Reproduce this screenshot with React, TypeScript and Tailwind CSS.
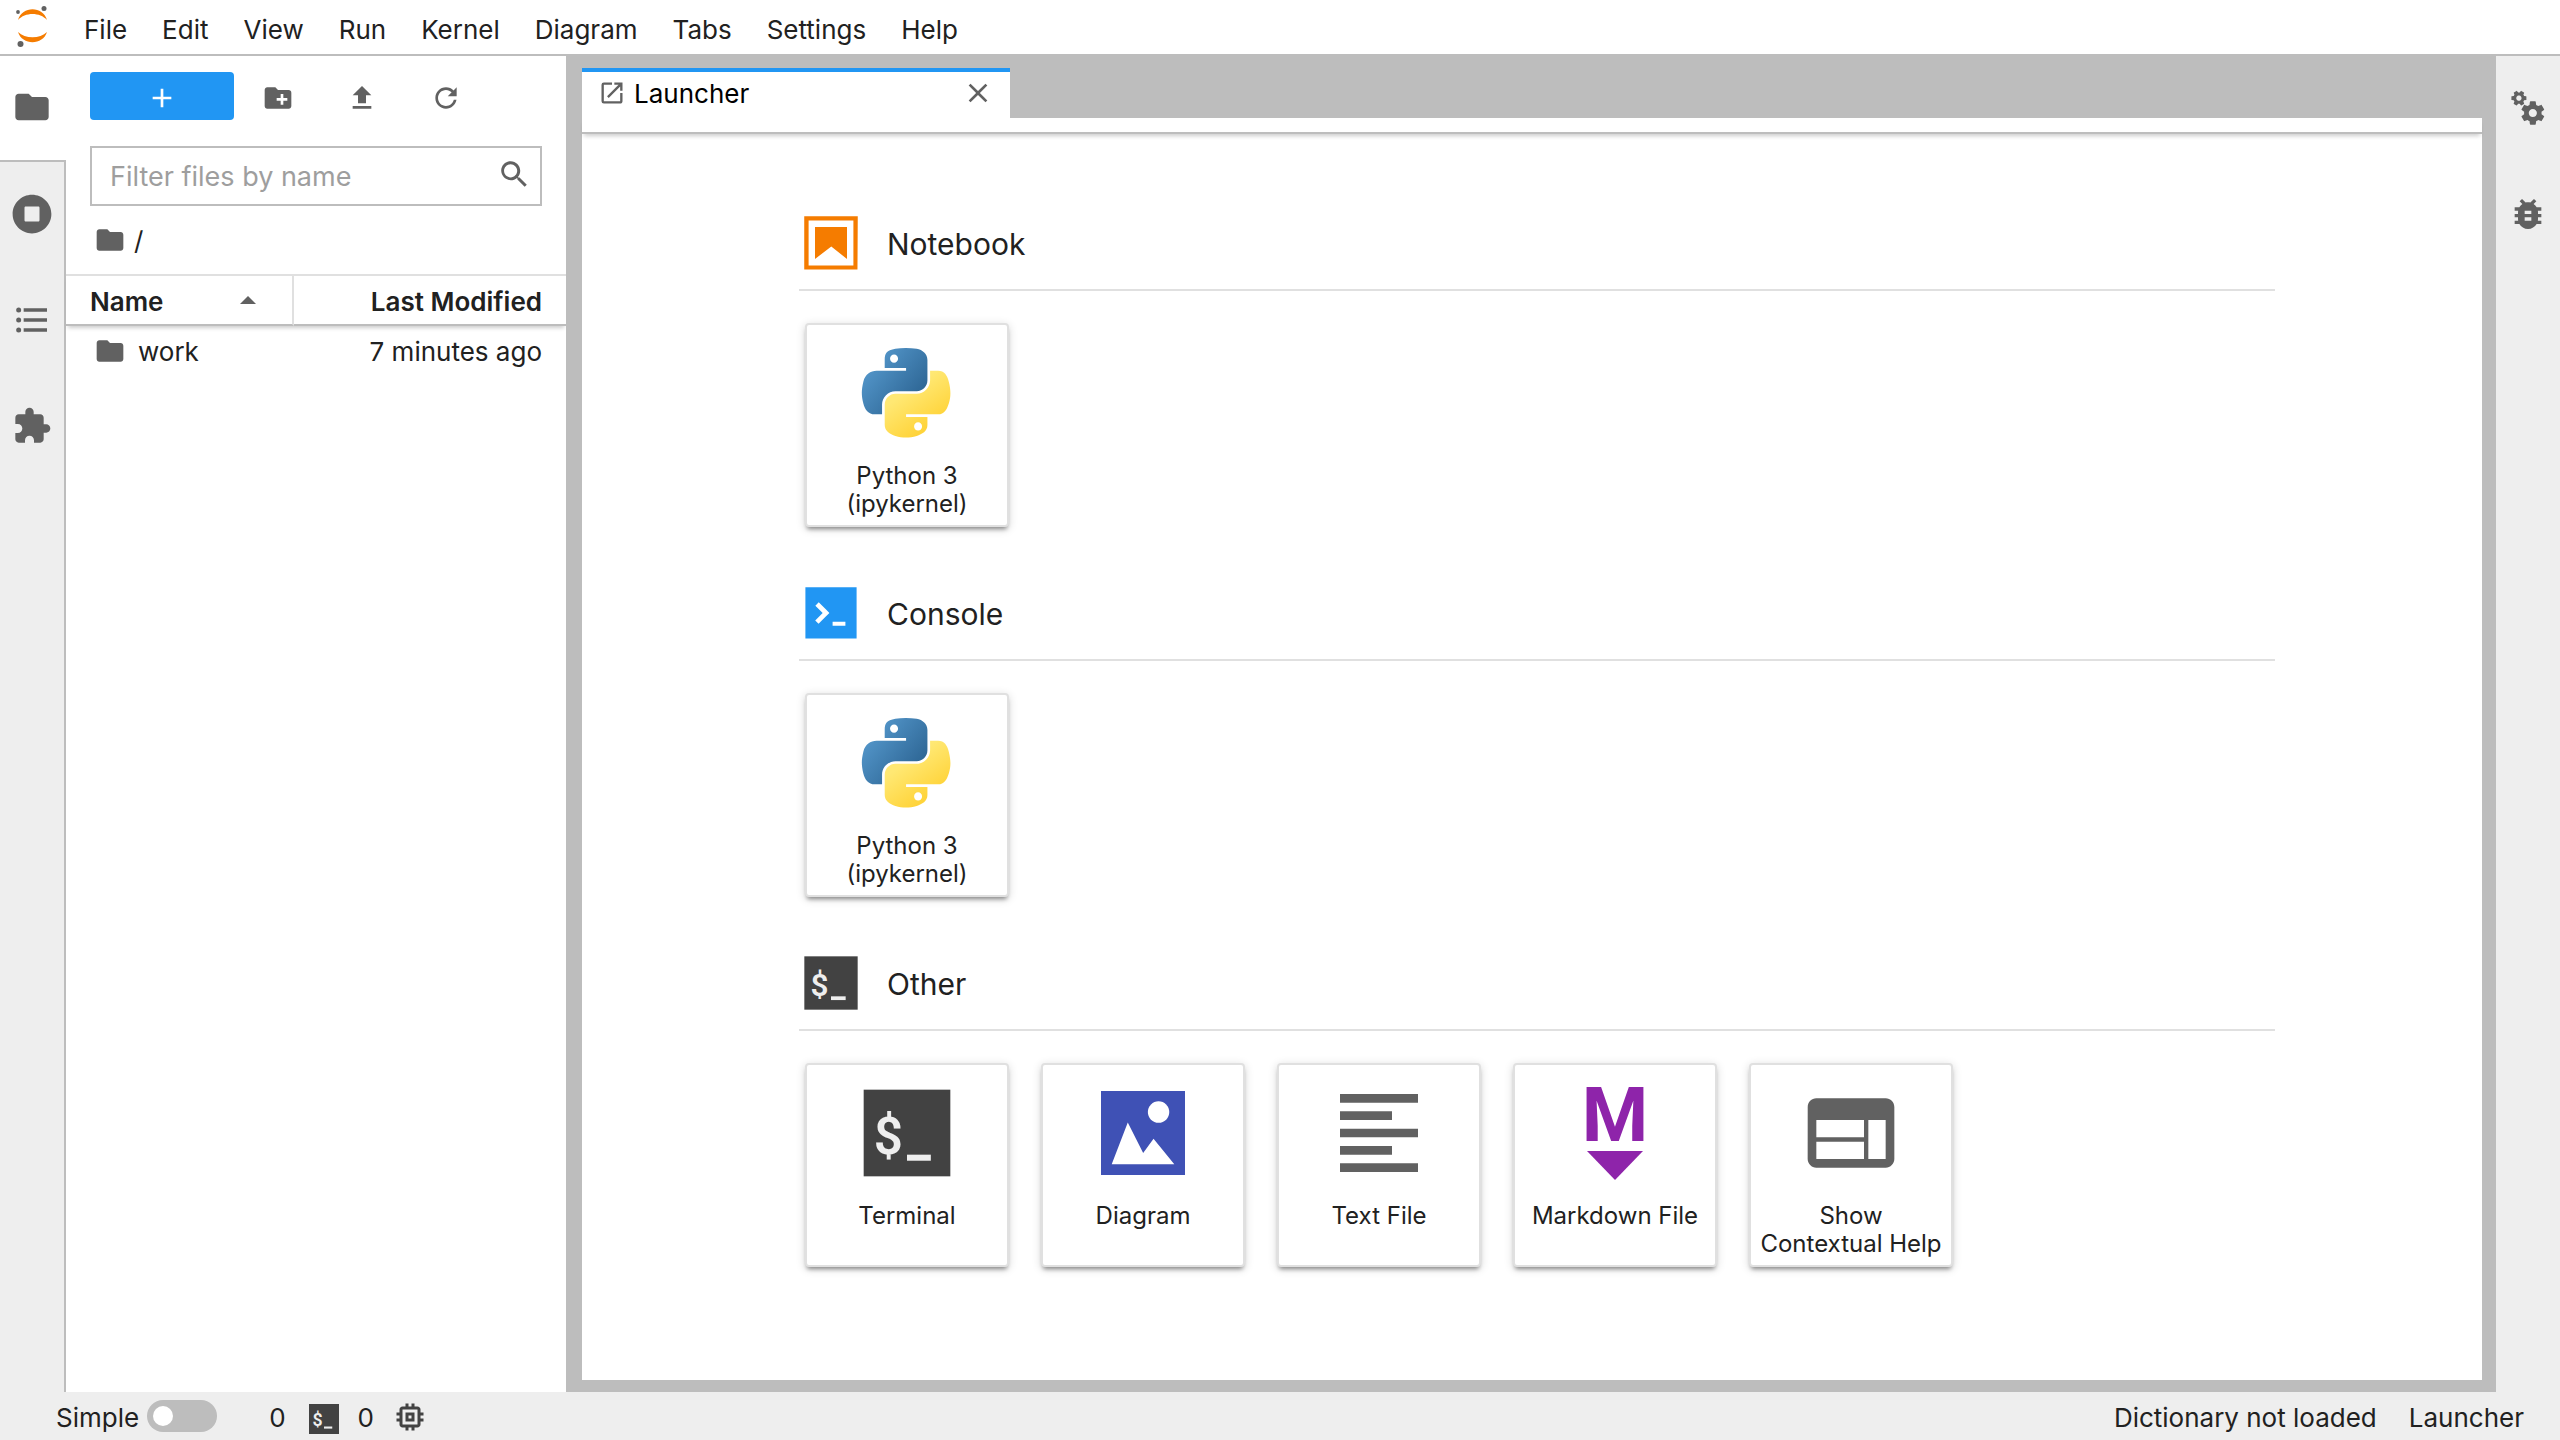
import { ReactNode } from 'react';

interface IconProps {
  d: string;
  viewBox?: string;
  className?: string;
}

function Icon({ d, viewBox = '0 0 24 24', className = 'size-8' }: IconProps) {
  return (
    <svg viewBox={viewBox} className={`shrink-0 ${className}`} fill="currentColor" aria-hidden="true">
      <path d={d} />
    </svg>
  );
}

const icons = {
  folder: 'M10 4H4c-1.1 0-1.99.9-1.99 2L2 18c0 1.1.9 2 2 2h16c1.1 0 2-.9 2-2V8c0-1.1-.9-2-2-2h-8l-2-2z',
  newFolder: 'M20 6h-8l-2-2H4c-1.11 0-1.99.89-1.99 2L2 18c0 1.11.89 2 2 2h16c1.11 0 2-.89 2-2V8c0-1.11-.89-2-2-2zm-1 8h-3v3h-2v-3h-3v-2h3V9h2v3h3v2z',
  add: 'M19 13h-6v6h-2v-6H5v-2h6V5h2v6h6v2z',
  upload: 'M9 16h6v-6h4l-7-7-7 7h4zm-4 2h14v2H5z',
  refresh: 'M9 13.5c-2.49 0-4.5-2.01-4.5-4.5S6.51 4.5 9 4.5c1.24 0 2.36.52 3.17 1.33L10 8h5V3l-1.76 1.76C12.15 3.68 10.66 3 9 3 5.69 3 3.01 5.69 3.01 9S5.69 15 9 15c2.97 0 5.43-2.16 5.9-5h-1.52c-.46 2-2.24 3.5-4.38 3.5z',
  search: 'M12.1 10.9h-.7l-.2-.2c.8-.9 1.3-2.2 1.3-3.5 0-3-2.4-5.4-5.4-5.4S1.8 4.2 1.8 7.1s2.4 5.4 5.4 5.4c1.3 0 2.5-.5 3.5-1.3l.2.2v.7l4.1 4.1 1.2-1.2-4.1-4.1zm-5 0c-2.1 0-3.7-1.7-3.7-3.7s1.7-3.7 3.7-3.7 3.7 1.7 3.7 3.7-1.6 3.7-3.7 3.7z',
  running: 'M256 8C119 8 8 119 8 256s111 248 248 248 248-111 248-248S393 8 256 8zm96 328c0 8.8-7.2 16-16 16H176c-8.8 0-16-7.2-16-16V176c0-8.8 7.2-16 16-16h160c8.8 0 16 7.2 16 16v160z',
  toc: 'M7 5h14v2H7V5m0 8v-2h14v2H7M4 4.5A1.5 1.5 0 1 1 4 7.5 1.5 1.5 0 0 1 4 4.5m0 6A1.5 1.5 0 1 1 4 13.5 1.5 1.5 0 0 1 4 10.5M7 19v-2h14v2H7m-3-2.5A1.5 1.5 0 1 1 4 19.5 1.5 1.5 0 0 1 4 16.5z',
  extension: 'M20.5 11H19V7c0-1.1-.9-2-2-2h-4V3.5C13 2.12 11.88 1 10.5 1S8 2.12 8 3.5V5H4c-1.1 0-1.99.9-1.99 2v3.8H3.5c1.49 0 2.7 1.21 2.7 2.7s-1.21 2.7-2.7 2.7H2V20c0 1.1.9 2 2 2h3.8v-1.5c0-1.49 1.21-2.7 2.7-2.7 1.49 0 2.7 1.21 2.7 2.7V22H17c1.1 0 2-.9 2-2v-4h1.5c1.38 0 2.5-1.12 2.5-2.5S21.88 11 20.5 11z',
  launcher: 'M19 19H5V5h7V3H5a2 2 0 0 0-2 2v14a2 2 0 0 0 2 2h14c1.1 0 2-.9 2-2v-7h-2v7zM14 3v2h3.59l-9.83 9.83 1.41 1.41L19 6.41V10h2V3h-7z',
  close: 'M19 6.41L17.59 5 12 10.59 6.41 5 5 6.41 10.59 12 5 17.59 6.41 19 12 13.41 17.59 19 19 17.59 13.41 12z',
  gears:
    'M14.9 17.45C16.25 17.45 17.35 16.35 17.35 15C17.35 13.65 16.25 12.55 14.9 12.55C13.54 12.55 12.45 13.65 12.45 15C12.45 16.35 13.54 17.45 14.9 17.45ZM20.1 15.68L21.58 16.84C21.71 16.95 21.75 17.13 21.66 17.29L20.26 19.71C20.17 19.86 20 19.92 19.83 19.86L18.09 19.16C17.73 19.44 17.33 19.67 16.91 19.85L16.64 21.7C16.62 21.87 16.47 22 16.3 22H13.5C13.32 22 13.18 21.87 13.15 21.7L12.89 19.85C12.46 19.67 12.07 19.44 11.71 19.16L9.96 19.86C9.81 19.92 9.62 19.86 9.54 19.71L8.14 17.29C8.05 17.13 8.09 16.95 8.22 16.84L9.7 15.68L9.65 15L9.7 14.31L8.22 13.16C8.09 13.05 8.05 12.86 8.14 12.71L9.54 10.29C9.62 10.13 9.81 10.07 9.96 10.13L11.71 10.84C12.07 10.56 12.46 10.32 12.89 10.15L13.15 8.3C13.18 8.13 13.32 8 13.5 8H16.3C16.47 8 16.62 8.13 16.64 8.3L16.91 10.15C17.33 10.32 17.73 10.56 18.09 10.84L19.83 10.13C20 10.07 20.17 10.13 20.26 10.29L21.66 12.71C21.75 12.86 21.71 13.05 21.58 13.16L20.1 14.31L20.15 15L20.1 15.68Z' +
    'M7.33 7.44C8.08 7.01 8.34 6.05 7.9 5.3C7.47 4.55 6.51 4.28 5.75 4.72C5.39 4.93 5.13 5.27 5.02 5.68C4.91 6.08 4.97 6.51 5.18 6.87C5.61 7.63 6.58 7.88 7.33 7.44ZM9.66 4.8L10.87 4.95C10.96 4.98 11.04 5.07 11.04 5.19L11.04 6.99C11.05 7.1 10.96 7.2 10.86 7.21L9.66 7.38L9.24 8.13L9.67 9.26C9.71 9.36 9.67 9.48 9.57 9.53L8.02 10.43C7.91 10.49 7.79 10.47 7.72 10.38L6.99 9.43L6.11 9.43L5.35 10.39C5.29 10.47 5.17 10.49 5.07 10.45L3.51 9.53C3.41 9.48 3.38 9.37 3.41 9.26L3.86 8.14L3.62 7.77L3.42 7.38L2.23 7.21C2.13 7.19 2.04 7.1 2.04 6.99L2.04 5.19C2.04 5.07 2.12 4.98 2.22 4.97L3.42 4.79L3.87 4.03L3.41 2.92C3.37 2.81 3.41 2.7 3.52 2.64L5.07 1.74C5.17 1.68 5.29 1.71 5.36 1.79L6.12 2.73L6.98 2.74L7.72 1.79C7.79 1.7 7.92 1.68 8.01 1.74L9.57 2.65C9.67 2.71 9.71 2.82 9.68 2.93L9.23 4.04L9.47 4.41L9.66 4.8Z',
  bug: 'M20 8h-2.81c-.45-.78-1.07-1.45-1.82-1.96L17 4.41 15.59 3l-2.17 2.17C12.96 5.06 12.49 5 12 5c-.49 0-.96.06-1.41.17L8.41 3 7 4.41l1.62 1.63C7.88 6.55 7.26 7.22 6.81 8H4v2h2.09c-.05.33-.09.66-.09 1v1H4v2h2v1c0 .34.04.67.09 1H4v2h2.81c1.04 1.79 2.97 3 5.19 3s4.15-1.21 5.19-3H20v-2h-2.09c.05-.33.09-.66.09-1v-1h2v-2h-2v-1c0-.34-.04-.67-.09-1H20V8zm-6 8h-4v-2h4v2zm0-4h-4v-2h4v2z',
  chip: 'M15 9H9v6h6V9zm-2 4h-2v-2h2v2zm8-2V9h-2V7c0-1.1-.9-2-2-2h-2V3h-2v2h-2V3H9v2H7c-1.1 0-2 .9-2 2v2H3v2h2v2H3v2h2v2c0 1.1.9 2 2 2h2v2h2v-2h2v2h2v-2h2c1.1 0 2-.9 2-2v-2h2v-2h-2v-2h2zm-4 6H7V7h10v10z',
  textFile: 'M15 15H3v2h12v-2zm0-8H3v2h12V7zM3 13h18v-2H3v2zm0 8h18v-2H3v2zM3 3v2h18V3H3z',
  contextualHelp: 'M20 4H4c-1.1 0-1.99.9-1.99 2L2 18c0 1.1.9 2 2 2h16c1.1 0 2-.9 2-2V6c0-1.1-.9-2-2-2zm-5 14H4v-4h11v4zm0-5H4V9h11v4zm5 5h-4V9h4v9z',
};

function JupyterLogo() {
  return (
    <svg viewBox="0 0 64 54" className="h-[54px] w-16 shrink-0" aria-hidden="true">
      <g fill="#f57c00">
        <path d="M18 20C22 5.8 43 5.8 47 20C40 12 25 12 18 20Z" />
        <path d="M18 32C22 45.5 43 45.5 47 32C40 39 25 39 18 32Z" />
      </g>
      <g fill="#616161">
        <circle cx="18" cy="12" r="1.9" />
        <circle cx="44" cy="8.6" r="2.5" />
        <circle cx="20.5" cy="44" r="3" />
      </g>
    </svg>
  );
}

function PythonIcon({ id }: { id: string }) {
  return (
    <svg viewBox="13 1 104 106" className="h-[92px] w-[90px] overflow-visible" aria-hidden="true">
      <defs>
        <linearGradient id={`${id}-blue`} x1="0" y1="0.1" x2="0.8" y2="0.75">
          <stop offset="0" stopColor="#5a9fd4" />
          <stop offset="1" stopColor="#306998" />
        </linearGradient>
        <linearGradient id={`${id}-yellow`} x1="0.7" y1="0.8" x2="0.35" y2="0.3">
          <stop offset="0" stopColor="#ffd43b" />
          <stop offset="1" stopColor="#ffe873" />
        </linearGradient>
      </defs>
      <path
        fill={`url(#${id}-blue)`}
        d="M63.391 1.988c-4.222.02-8.252.379-11.8 1.007-10.45 1.846-12.346 5.71-12.346 12.837v9.411h24.693v3.137H29.977c-7.176 0-13.46 4.313-15.426 12.521-2.268 9.405-2.368 15.275 0 25.096 1.755 7.311 5.947 12.519 13.124 12.519h8.491V67.234c0-8.151 7.051-15.34 15.426-15.34h24.665c6.866 0 12.346-5.654 12.346-12.548V15.833c0-6.693-5.646-11.72-12.346-12.837-4.244-.706-8.645-1.027-12.866-1.008zM50.037 9.557c2.55 0 4.634 2.117 4.634 4.721 0 2.593-2.083 4.69-4.634 4.69-2.56 0-4.633-2.097-4.633-4.69-.001-2.604 2.073-4.721 4.633-4.721z"
      />
      <path
        fill={`url(#${id}-yellow)`}
        d="M91.682 28.38v10.966c0 8.5-7.208 15.655-15.426 15.655H51.591c-6.756 0-12.346 5.783-12.346 12.549v23.515c0 6.691 5.818 10.628 12.346 12.547 7.816 2.297 15.312 2.713 24.665 0 6.216-1.801 12.346-5.423 12.346-12.547v-9.412H63.938v-3.138h37.012c7.176 0 9.852-5.005 12.348-12.519 2.578-7.735 2.467-15.174 0-25.096-1.774-7.145-5.161-12.521-12.348-12.521h-9.268zM77.809 87.927c2.561 0 4.634 2.097 4.634 4.692 0 2.602-2.074 4.719-4.634 4.719-2.55 0-4.633-2.117-4.633-4.719 0-2.595 2.083-4.692 4.633-4.692z"
      />
    </svg>
  );
}

function NotebookIcon() {
  return (
    <svg viewBox="0 0 22 22" className="size-16" fill="#f57c00" aria-hidden="true">
      <path d="M18.7 3.3v15.4H3.3V3.3h15.4m1.5-1.5H1.8v18.3h18.3l.1-18.3z" />
      <path d="M16.5 16.5l-5.4-4.3-5.6 4.3v-11h11z" />
    </svg>
  );
}

function ConsoleIcon() {
  return (
    <svg viewBox="0 0 200 200" className="size-16" aria-hidden="true">
      <path fill="#2196f3" d="M20 19.8h160v159.9H20z" />
      <path fill="#fff" d="M105 127.3h40v12.8h-40zM51.1 77L74 99.9l-23.3 23.3 10.5 10.5 23.3-23.3L95 99.9 84.5 89.4 61.6 66.5z" />
    </svg>
  );
}

function TerminalIcon({ className }: { className: string }) {
  return (
    <svg viewBox="0 0 240 240" className={`shrink-0 ${className}`} aria-hidden="true">
      <rect x="20" y="20" width="200" height="200" fill="#424242" />
      <text x="43" y="169" fontSize="118" fontWeight="600" fontFamily="Roboto, sans-serif" fill="#eee">
        $
      </text>
      <rect x="120" y="170" width="55" height="14" fill="#eee" />
    </svg>
  );
}

function DiagramIcon() {
  return (
    <svg viewBox="0 0 251 251" className="size-[84px]" aria-hidden="true">
      <rect width="251" height="251" fill="#3f51b5" />
      <circle cx="172" cy="63" r="32" fill="#fff" />
      <path fill="#fff" d="M32 219L80 94l46 91 31-42 62 76z" />
    </svg>
  );
}

function MarkdownIcon() {
  return (
    <svg viewBox="0 0 104 104" className="size-[104px] overflow-visible" fill="#8e24aa" aria-hidden="true">
      <text x="52" y="60" textAnchor="middle" fontSize="76" fontWeight="700" fontFamily="Roboto, sans-serif">
        M
      </text>
      <path d="M24 70h56L52 99z" />
    </svg>
  );
}

interface LauncherItem {
  label: string;
  icon: ReactNode;
}

interface LauncherSectionProps {
  title: string;
  icon: ReactNode;
  items: LauncherItem[];
}

function LauncherSection({ title, icon, items }: LauncherSectionProps) {
  return (
    <section className="h-[370px]">
      <div className="flex h-20 items-start border-b-2 border-[#e0e0e0]">
        {icon}
        <h2 className="ml-6 text-[30px] leading-[66px]">{title}</h2>
      </div>
      <div className="flex flex-wrap gap-8 pt-8 pl-1.5">
        {items.map((item) => (
          <button
            key={item.label}
            className="flex h-[204px] w-[204px] flex-col items-center rounded-sm border-2 border-[#e0e0e0] bg-white px-1.5 shadow-[0_4px_4px_-2px_rgba(0,0,0,0.4),0_2px_10px_0_rgba(0,0,0,0.16)]"
          >
            <span className="flex h-[136px] items-center justify-center">{item.icon}</span>
            <span className="pt-px text-[24px] leading-7">{item.label}</span>
          </button>
        ))}
      </div>
    </section>
  );
}

const menus = ['File', 'Edit', 'View', 'Run', 'Kernel', 'Diagram', 'Tabs', 'Settings', 'Help'];

const sideTabs = [
  { label: 'File Browser', d: icons.folder },
  { label: 'Running Terminals and Kernels', d: icons.running, viewBox: '0 0 512 512' },
  { label: 'Table of Contents', d: icons.toc },
  { label: 'Extension Manager', d: icons.extension },
];

const rightTabs = [
  { label: 'Property Inspector', d: icons.gears },
  { label: 'Debugger', d: icons.bug },
];

const fileActions = [
  { label: 'New Folder', d: icons.newFolder },
  { label: 'Upload Files', d: icons.upload },
  { label: 'Refresh File List', d: icons.refresh, viewBox: '0 0 18 18' },
];

const otherItems: LauncherItem[] = [
  { label: 'Terminal', icon: <TerminalIcon className="size-[104px]" /> },
  { label: 'Diagram', icon: <DiagramIcon /> },
  { label: 'Text File', icon: <Icon d={icons.textFile} className="size-[104px] text-[#616161]" /> },
  { label: 'Markdown File', icon: <MarkdownIcon /> },
  { label: 'Show Contextual Help', icon: <Icon d={icons.contextualHelp} className="size-[104px] text-[#616161]" /> },
];

function FileBrowser() {
  return (
    <aside className="w-[500px] shrink-0 bg-white">
      <div className="flex h-[90px] px-6 pt-4">
        <button aria-label="New Launcher" className="mr-0.5 flex h-12 w-36 items-center justify-center rounded bg-[#2196f3] pt-1 text-white">
          <Icon d={icons.add} />
        </button>
        {fileActions.map((action) => (
          <button key={action.label} aria-label={action.label} className="flex h-12 w-21 items-center justify-center pt-1 text-[#616161]">
            <Icon d={action.d} viewBox={action.viewBox} />
          </button>
        ))}
      </div>
      <div className="mx-6 flex h-[60px] items-center border-2 border-[#bdbdbd] pr-2.5 pl-4.5">
        <input
          type="text"
          aria-label="Filter files by name"
          placeholder="Filter files by name"
          className="w-full pt-0.5 text-[27px] outline-none placeholder:text-[#9e9e9e]"
        />
        <Icon d={icons.search} viewBox="0 0 18 18" className="mb-1 size-8 text-[#616161]" />
      </div>
      <div className="flex h-17 items-center gap-2 px-7">
        <Icon d={icons.folder} className="size-8 text-[#616161]" />
        <span>/</span>
      </div>
      <table className="w-full table-fixed border-separate border-spacing-0">
        <thead className="shadow-[0_4px_4px_-2px_rgba(0,0,0,0.2)]">
          <tr className="h-[52px]">
            <th className="w-[228px] border-y-2 border-r-2 border-t-[#e0e0e0] border-r-[#e0e0e0] border-b-[#bdbdbd] pt-1 pr-9 pl-6 text-left leading-11 font-semibold">
              <span className="flex items-center justify-between">
                Name
                <svg viewBox="0 0 16 8" className="mb-1 h-2 w-4" fill="#616161" aria-hidden="true">
                  <path d="M0 8l8-8 8 8z" />
                </svg>
              </span>
            </th>
            <th className="border-y-2 border-t-[#e0e0e0] border-b-[#bdbdbd] pt-1 pr-6 text-right leading-11 font-semibold">Last Modified</th>
          </tr>
        </thead>
        <tbody>
          <tr className="h-[50px]">
            <td className="pl-7">
              <span className="flex items-center gap-3">
                <Icon d={icons.folder} className="size-8 text-[#616161]" />
                work
              </span>
            </td>
            <td className="pr-6 text-right">7 minutes ago</td>
          </tr>
        </tbody>
      </table>
    </aside>
  );
}

export default function App() {
  return (
    <div className="flex h-screen flex-col bg-[#eee] font-[Inter,'Liberation_Sans',sans-serif] text-[26px] text-[#212121]">
      <header className="flex h-14 shrink-0 items-center border-b-2 border-[#bdbdbd] bg-white">
        <JupyterLogo />
        <nav className="flex gap-[35px] pl-5">
          {menus.map((menu) => (
            <button key={menu} className="pt-1.5 leading-12">
              {menu}
            </button>
          ))}
        </nav>
      </header>

      <div className="flex min-h-0 flex-1">
        <div className="flex w-[66px] shrink-0 flex-col text-[#616161]">
          {sideTabs.map((tab, index) => (
            <button
              key={tab.label}
              aria-label={tab.label}
              className={
                index === 0
                  ? 'flex h-[106px] items-center border-b-2 border-[#bdbdbd] bg-white pb-0.5 pl-3'
                  : 'flex h-[106px] items-center border-r-2 border-[#bdbdbd] pb-0.5 pl-3'
              }
            >
              <Icon d={tab.d} viewBox={tab.viewBox} className="size-10" />
            </button>
          ))}
          <div className="flex-1 border-r-2 border-[#bdbdbd]" />
        </div>

        <FileBrowser />

        <main className="flex min-w-0 flex-1 flex-col bg-[#bdbdbd] pt-3 pr-3.5 pb-3 pl-4">
          <div className="flex h-[50px] shrink-0">
            <div className="flex w-[428px] items-center border-t-4 border-[#2196f3] bg-white px-4 pb-1 text-black">
              <Icon d={icons.launcher} className="mr-2 size-7 text-[#616161]" />
              <span className="flex-1">Launcher</span>
              <button aria-label="Close tab" className="text-[#616161]">
                <Icon d={icons.close} />
              </button>
            </div>
          </div>
          <div className="z-10 h-4 shrink-0 border-b-2 border-[#bdbdbd] bg-white shadow-[0_4px_4px_-2px_rgba(0,0,0,0.2)]" />
          <div className="min-h-0 flex-1 bg-white pt-[77px] pr-[207px] pl-[217px]">
            <LauncherSection
              title="Notebook"
              icon={<NotebookIcon />}
              items={[{ label: 'Python 3 (ipykernel)', icon: <PythonIcon id="notebook" /> }]}
            />
            <LauncherSection
              title="Console"
              icon={<ConsoleIcon />}
              items={[{ label: 'Python 3 (ipykernel)', icon: <PythonIcon id="console" /> }]}
            />
            <LauncherSection title="Other" icon={<TerminalIcon className="size-16" />} items={otherItems} />
          </div>
        </main>

        <div className="flex w-16 shrink-0 flex-col text-[#616161]">
          {rightTabs.map((tab) => (
            <button key={tab.label} aria-label={tab.label} className="flex h-[106px] items-center justify-center pb-0.5">
              <Icon d={tab.d} className="size-10" />
            </button>
          ))}
        </div>
      </div>

      <footer className="flex h-12 shrink-0 items-center justify-between pt-0.5 pr-9 pl-14">
        <div className="flex items-center">
          <label htmlFor="simple-mode">Simple</label>
          <input
            id="simple-mode"
            type="checkbox"
            role="switch"
            className="mr-13 mb-0.5 ml-2 flex h-8 w-[70px] appearance-none items-center rounded-full bg-[#bdbdbd] px-1.5 before:size-5 before:rounded-full before:bg-white"
          />
          <button className="flex items-center">
            0
            <TerminalIcon className="mt-1 mr-4 ml-5 size-9" />
            0
            <Icon d={icons.chip} className="ml-4.5 size-9 text-[#424242]" />
          </button>
        </div>
        <div className="flex gap-8">
          <span>Dictionary not loaded</span>
          <span>Launcher</span>
        </div>
      </footer>
    </div>
  );
}
